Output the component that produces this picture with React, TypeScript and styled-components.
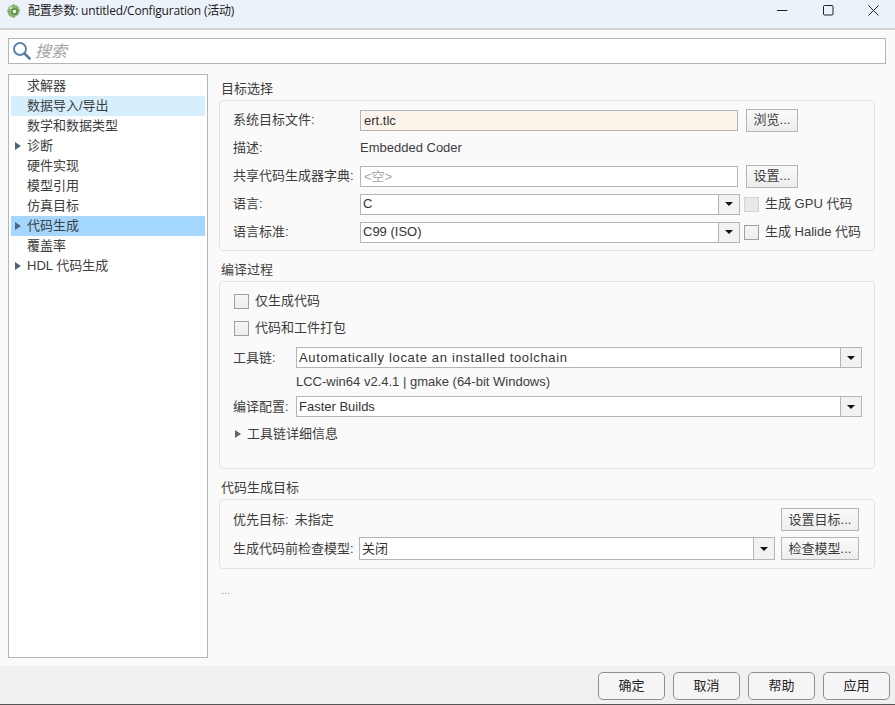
import React from 'react';
import styled, { createGlobalStyle } from 'styled-components';

const TREE_ITEMS = [
	{ label: '求解器' },
	{ label: '数据导入/导出', state: 'hover' },
	{ label: '数学和数据类型' },
	{ label: '诊断', arrow: true },
	{ label: '硬件实现' },
	{ label: '模型引用' },
	{ label: '仿真目标' },
	{ label: '代码生成', arrow: true, state: 'selected' },
	{ label: '覆盖率' },
	{ label: 'HDL 代码生成', arrow: true },
];

const GlobalStyle = createGlobalStyle`
	html, body {
		margin: 0;
		padding: 0;
		background: #fafafa;
	}
	body {
		font-family: "Liberation Sans", "Noto Sans CJK SC", sans-serif;
		font-size: 13px;
		line-height: 16px;
		color: #333;
	}
	* {
		box-sizing: border-box;
	}
`;

type ComboProps = { value: string; width: number; height?: number; spacing?: number };

const Combo: React.FC<ComboProps> = ({ value, width, height = 21, spacing = 0 }) => (
	<ComboBox $width={width} $height={height}>
		<ComboValue $spacing={spacing}>{value}</ComboValue>
		<ComboArrow>
			<ArrowDown />
		</ComboArrow>
	</ComboBox>
);

const App: React.FC = () => {
	return (
		<Window>
			<GlobalStyle />
			<TitleBar>
				<TitleLeft>
					<svg width="14" height="14" viewBox="0 0 16 16">
						<path
							d="M6 1h3l.5 1.6 1.6-.7 2 2-.7 1.6 1.6.6v3l-1.6.6.7 1.6-2 2-1.6-.7L9 15H6l-.6-1.6-1.5.7-2-2 .7-1.6L1 10V6.500l1.600-.6-.7-1.600 2-2 1.500.7z"
							fill="#8fb96a"
							stroke="#6f9a52"
							strokeWidth="0.8"
						/>
						<circle cx="8.500" cy="8.500" r="3" fill="#e3eed6" stroke="#4f7f3c" strokeWidth="1.400" />
						<circle cx="4.500" cy="4.500" r="1.600" fill="#cfe0b8" />
					</svg>
					<TitleText>配置参数: untitled/Configuration (活动)</TitleText>
				</TitleLeft>
				<WindowControls>
					<svg width="11" height="11" viewBox="0 0 11 11">
						<path d="M0 5.500h10.500" stroke="#222" fill="none" />
					</svg>
					<svg width="11" height="11" viewBox="0 0 11 11">
						<rect x="0.500" y="0.500" width="9.500" height="9.500" rx="1" stroke="#222" fill="none" />
					</svg>
					<svg width="11" height="11" viewBox="0 0 11 11">
						<path d="M0.500 0.500l10 10M10.500 0.500l-10 10" stroke="#222" fill="none" />
					</svg>
				</WindowControls>
			</TitleBar>
			<Body>
				<SearchBar>
					<svg width="20" height="20" viewBox="0 0 20 20">
						<circle cx="8" cy="8" r="6" fill="none" stroke="#5b86ad" strokeWidth="2" />
						<path d="M12.500 12.500l5 5" stroke="#5b7f9e" strokeWidth="2.600" strokeLinecap="round" />
					</svg>
					<SearchHint>搜索</SearchHint>
				</SearchBar>
				<Columns>
					<Tree>
						{TREE_ITEMS.map((item) => (
							<TreeRow key={item.label} $state={item.state}>
								{item.arrow && <TreeArrow />}
								<span>{item.label}</span>
							</TreeRow>
						))}
					</Tree>
					<Content>
						<SectionTitle>目标选择</SectionTitle>
						<TargetPanel>
							<TargetRow>
								<Label>系统目标文件:</Label>
								<TextField $tint $width={378}>ert.tlc</TextField>
								<PushButton $width={52}>浏览...</PushButton>
							</TargetRow>
							<TargetRow>
								<Label>描述:</Label>
								<PlainValue>Embedded Coder</PlainValue>
							</TargetRow>
							<TargetRow>
								<Label>共享代码生成器字典:</Label>
								<TextField $width={378} $muted>&lt;空&gt;</TextField>
								<PushButton $width={52}>设置...</PushButton>
							</TargetRow>
							<TargetRow>
								<Label>语言:</Label>
								<Combo value="C" width={380} />
								<TargetCheck>
									<CheckBox $disabled />
									<CheckLabel>生成 GPU 代码</CheckLabel>
								</TargetCheck>
							</TargetRow>
							<TargetRow>
								<Label>语言标准:</Label>
								<Combo value="C99 (ISO)" width={380} />
								<TargetCheck>
									<CheckBox />
									<CheckLabel>生成 Halide 代码</CheckLabel>
								</TargetCheck>
							</TargetRow>
						</TargetPanel>
						<SectionTitle $top={10}>编译过程</SectionTitle>
						<BuildPanel>
							<CheckRow>
								<CheckBox />
								<CheckLabel>仅生成代码</CheckLabel>
							</CheckRow>
							<CheckRow>
								<CheckBox />
								<CheckLabel>代码和工件打包</CheckLabel>
							</CheckRow>
							<ToolRow>
								<ToolLabel>工具链:</ToolLabel>
								<Combo value="Automatically locate an installed toolchain" width={566} spacing={0.65} />
							</ToolRow>
							<ToolNote>LCC-win64 v2.4.1 | gmake (64-bit Windows)</ToolNote>
							<ToolRow>
								<ToolLabel>编译配置:</ToolLabel>
								<Combo value="Faster Builds" width={566} />
							</ToolRow>
							<Disclosure>
								<SmallArrow />
								工具链详细信息
							</Disclosure>
						</BuildPanel>
						<SectionTitle $top={10}>代码生成目标</SectionTitle>
						<GoalPanel>
							<GoalRow>
								<GoalText>
									<span>优先目标:</span>
									<span>未指定</span>
								</GoalText>
								<GoalButton $width={78}>设置目标...</GoalButton>
							</GoalRow>
							<GoalRow>
								<GoalCheck>
									<GoalLabel>生成代码前检查模型:</GoalLabel>
									<Combo value="关闭" width={416} height={23} />
								</GoalCheck>
								<GoalButton $width={78}>检查模型...</GoalButton>
							</GoalRow>
						</GoalPanel>
						<Ellipsis>...</Ellipsis>
					</Content>
				</Columns>
			</Body>
			<Footer>
				<DialogButton>确定</DialogButton>
				<DialogButton>取消</DialogButton>
				<DialogButton>帮助</DialogButton>
				<DialogButton>应用</DialogButton>
			</Footer>
		</Window>
	);
};

const Window = styled.div`
	width: 895px;
	height: 705px;
	display: flex;
	flex-direction: column;
	overflow: hidden;
	background: #fafafa;
`;

const TitleBar = styled.div`
	height: 30px;
	flex: none;
	display: flex;
	align-items: flex-start;
	justify-content: space-between;
	padding: 3px 0 0 7px;
	background: #ecf2fa;
	border-bottom: 2px solid #d3d3d3;
`;

const TitleLeft = styled.div`
	display: flex;
	align-items: center;
	gap: 7px;
	height: 16px;
`;

const TitleText = styled.span`
	font-family: "Open Sans", "Noto Sans CJK SC", sans-serif;
	font-size: 12px;
	letter-spacing: -0.2px;
	color: #1a1a1a;
`;

const WindowControls = styled.div`
	display: flex;
	gap: 34.5px;
	padding: 2px 16px 0 0;
	svg {
		display: block;
	}
`;

const Body = styled.div`
	flex: 1;
	min-height: 0;
	padding: 8px 9px 8px 8px;
	display: flex;
	flex-direction: column;
`;

const SearchBar = styled.div`
	height: 26px;
	flex: none;
	display: flex;
	align-items: center;
	gap: 3px;
	padding-left: 3px;
	background: #fff;
	border: 1px solid #b5b5b5;
`;

const SearchHint = styled.span`
	font-size: 16px;
	line-height: 18px;
	margin-top: 2px;
	font-style: italic;
	color: #a3a3a3;
`;

const Columns = styled.div`
	flex: 1;
	min-height: 0;
	margin-top: 10px;
	display: flex;
`;

const Tree = styled.div`
	width: 200px;
	flex: none;
	height: 584px;
	padding: 1px 2px;
	background: #fff;
	border: 1px solid #b5b5b5;
`;

const TreeRow = styled.div<{ $state?: string }>`
	position: relative;
	height: 20px;
	display: flex;
	align-items: center;
	padding-left: 16px;
	color: #3d3d3d;
	background: ${(props) =>
		props.$state === 'selected' ? '#a3d7ff' : props.$state === 'hover' ? '#d6efff' : 'transparent'};
`;

const TreeArrow = styled.i`
	position: absolute;
	left: 4px;
	top: 6px;
	border-left: 6px solid #4f6478;
	border-top: 4.5px solid transparent;
	border-bottom: 4.5px solid transparent;
`;

const Content = styled.div`
	width: 656px;
	margin-left: 11px;
	padding-top: 6px;
	display: flex;
	flex-direction: column;
`;

const SectionTitle = styled.div<{ $top?: number }>`
	height: 20px;
	line-height: 18px;
	margin-top: ${(props) => props.$top ?? 0}px;
	margin-left: 2px;
	color: #3d3d3d;
`;

const Panel = styled.div`
	width: 656px;
	border: 1px solid #e3e3e3;
	border-radius: 4px;
	background: #fafafa;
`;

const TargetPanel = styled(Panel)`
	height: 151px;
	padding: 5px 0 0 13px;
`;

const TargetRow = styled.div`
	height: 28px;
	display: flex;
	align-items: center;
`;

const Label = styled.span`
	width: 127px;
	flex: none;
	white-space: nowrap;
	color: #3d3d3d;
`;

const PlainValue = styled.span`
	color: #3d3d3d;
`;

const TextField = styled.div<{ $width: number; $tint?: boolean; $muted?: boolean }>`
	width: ${(props) => props.$width}px;
	height: 21px;
	flex: none;
	line-height: 19px;
	padding-left: 3px;
	background: ${(props) => (props.$tint ? '#fcf4eb' : '#fff')};
	border: 1px solid #b5b5b5;
	color: ${(props) => (props.$muted ? '#a8a8a8' : '#333')};
`;

const PushButton = styled.button<{ $width: number }>`
	width: ${(props) => props.$width}px;
	height: 23px;
	flex: none;
	margin-left: 8px;
	padding: 0;
	font: inherit;
	color: #3d3d3d;
	background: linear-gradient(#fafafa, #ededed);
	border: 1px solid #b5b5b5;
`;

const GoalButton = styled(PushButton)`
	margin-left: 0;
`;

const ComboBox = styled.div<{ $width: number; $height: number }>`
	width: ${(props) => props.$width}px;
	height: ${(props) => props.$height}px;
	flex: none;
	display: flex;
	background: #fff;
	border: 1px solid #b5b5b5;
`;

const ComboValue = styled.span<{ $spacing: number }>`
	flex: 1;
	align-self: center;
	padding-left: 2px;
	letter-spacing: ${(props) => props.$spacing}px;
	color: #333;
	white-space: nowrap;
`;

const ComboArrow = styled.span`
	width: 21px;
	flex: none;
	display: flex;
	align-items: center;
	justify-content: center;
	background: #f2f2f2;
	border-left: 1px solid #b5b5b5;
`;

const ArrowDown = styled.i`
	border-top: 4px solid #111;
	border-left: 4px solid transparent;
	border-right: 4px solid transparent;
`;

const TargetCheck = styled.div`
	display: flex;
	align-items: center;
	gap: 6px;
	margin-left: 4px;
	white-space: nowrap;
`;

const CheckBox = styled.span<{ $disabled?: boolean }>`
	width: 15px;
	height: 15px;
	flex: none;
	border: 1px solid ${(props) => (props.$disabled ? '#d4d4d4' : '#a0a0a0')};
	background: ${(props) => (props.$disabled ? '#e9e9e9' : 'linear-gradient(#f6f6f6, #ededed)')};
`;

const CheckLabel = styled.span`
	color: #3d3d3d;
`;

const BuildPanel = styled(Panel)`
	height: 188px;
	padding: 9px 0 0 14px;
`;

const CheckRow = styled.div`
	height: 20px;
	margin-bottom: 7px;
	display: flex;
	align-items: center;
	gap: 6px;
	&:nth-child(2) {
		margin-bottom: 9px;
	}
`;

const ToolRow = styled.div`
	height: 21px;
	margin-left: -1px;
	display: flex;
	align-items: center;
`;

const ToolLabel = styled.span`
	width: 63px;
	flex: none;
	color: #3d3d3d;
	white-space: nowrap;
`;

const ToolNote = styled.div`
	height: 28px;
	line-height: 27px;
	padding-left: 62px;
	color: #3d3d3d;
`;

const Disclosure = styled.div`
	height: 20px;
	margin-top: 7px;
	display: flex;
	align-items: center;
	gap: 6px;
	padding-left: 1px;
	color: #3d3d3d;
`;

const SmallArrow = styled.i`
	border-left: 6px solid #666;
	border-top: 4px solid transparent;
	border-bottom: 4px solid transparent;
`;

const GoalPanel = styled(Panel)`
	height: 70px;
	padding: 8px 15px 0 13px;
`;

const GoalRow = styled.div`
	height: 23px;
	margin-bottom: 6px;
	display: flex;
	align-items: center;
	justify-content: space-between;
`;

const GoalText = styled.div`
	display: flex;
	gap: 6px;
	color: #3d3d3d;
`;

const GoalCheck = styled.div`
	display: flex;
	align-items: center;
	color: #3d3d3d;
	white-space: nowrap;
`;

const GoalLabel = styled.span`
	width: 126px;
	flex: none;
`;

const Ellipsis = styled.div`
	margin: 13px 0 0 2px;
	font-size: 11px;
	color: #999;
`;

const Footer = styled.div`
	height: 39px;
	flex: none;
	display: flex;
	justify-content: flex-end;
	gap: 8px;
	padding: 6px 5px 0 0;
	background: #f0f0f0;
	border-bottom: 1px solid #555;
`;

const DialogButton = styled.button`
	width: 67px;
	height: 28px;
	padding: 0;
	font: inherit;
	color: #222;
	background: #f5f5f5;
	border: 1px solid #8f8f8f;
	border-radius: 5px;
`;

export default App;
